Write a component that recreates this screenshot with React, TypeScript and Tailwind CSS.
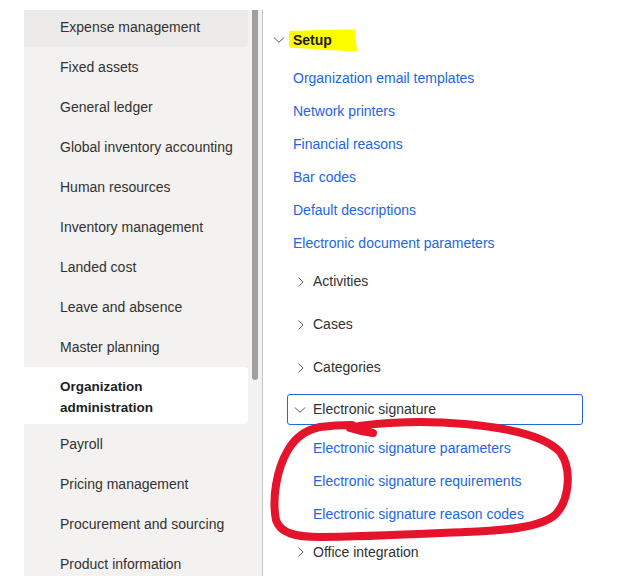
import React from "react";

const font = { fontFamily: '"Liberation Sans", Arial, sans-serif' };

const navItems = [
  "Expense management",
  "Fixed assets",
  "General ledger",
  "Global inventory accounting",
  "Human resources",
  "Inventory management",
  "Landed cost",
  "Leave and absence",
  "Master planning",
  "Organization administration",
  "Payroll",
  "Pricing management",
  "Procurement and sourcing",
  "Product information",
];

const setupLinks = [
  "Organization email templates",
  "Network printers",
  "Financial reasons",
  "Bar codes",
  "Default descriptions",
  "Electronic document parameters",
];

const signatureLinks = [
  "Electronic signature parameters",
  "Electronic signature requirements",
  "Electronic signature reason codes",
];

function ChevronRight() {
  return (
    <svg width="12" height="12" viewBox="0 0 12 12" className="shrink-0">
      <path d="M3.5 1.5 L8 6 L3.5 10.5" fill="none" stroke="#605e5c" strokeWidth="1" />
    </svg>
  );
}

function ChevronDown({ color = "#605e5c" }: { color?: string }) {
  return (
    <svg width="12" height="12" viewBox="0 0 12 12" className="shrink-0">
      <path d="M0.8 3.5 L6 8.2 L11.2 3.5" fill="none" stroke={color} strokeWidth="1" />
    </svg>
  );
}

function NavItem({ label, index }: { label: string; index: number }) {
  const hovered = index === 0;
  const selected = label === "Organization administration";
  if (selected) {
    return (
      <div className="h-[57px] shrink-0 flex items-center bg-white rounded-r-[4px] pl-[36px] pr-[8px] pt-[3px]">
        <span className="max-w-[150px] text-[13.5px] font-bold leading-[21px] text-[#201f1e]">{label}</span>
      </div>
    );
  }
  return (
    <div
      className={
        "h-10 shrink-0 flex items-center pl-[36px] pr-[8px] rounded-r-[4px] " +
        (hovered ? "bg-[#edebe9] -mt-[3px]" : "")
      }
    >
      <span className="text-[14px] leading-5 text-[#323130] whitespace-nowrap">{label}</span>
    </div>
  );
}

function GroupRow({ label }: { label: string }) {
  return (
    <div className="h-[43px] flex items-center pl-[32px]">
      <ChevronRight />
      <span className="ml-[6px] text-[14px] text-[#323130]">{label}</span>
    </div>
  );
}

function LinkRow({ label, indent }: { label: string; indent: string }) {
  return (
    <div className={"h-[33px] flex items-center " + indent}>
      <span className="text-[14px] text-[#2266e3] whitespace-nowrap">{label}</span>
    </div>
  );
}

export default function App() {
  return (
    <div className="relative w-[623px] h-[576px] overflow-hidden bg-white flex" style={font}>
      {/* Module navigation */}
      <div className="ml-[24px] mt-[10px] w-[239px] h-[566px] flex bg-[#f3f2f1] border-r border-[#c8c6c4] overflow-hidden">
        <div className="w-[224px] flex flex-col overflow-hidden">
          {navItems.map((label, i) => (
            <NavItem key={label} label={label} index={i} />
          ))}
        </div>
        <div className="ml-[4px] w-[6px] h-[370px] bg-[#a19f9d] rounded-b-[3px]" />
      </div>

      {/* Menu links */}
      <div className="flex-1 flex flex-col pt-[25px]">
        <div className="h-[30px] flex items-center pl-[10px]">
          <ChevronDown color="#4a5a80" />
          <span className="relative ml-[8px] inline-block leading-5">
            <svg
              className="absolute pointer-events-none"
              style={{ left: -5, top: -1 }}
              width="72"
              height="23"
              viewBox="0 0 72 23"
            >
              <path d="M1 2 C 20 1.5, 45 0.5, 67 0.5 L 69 22 C 45 22, 20 19.5, 1 18.5 Z" fill="#fdfd00" />
            </svg>
            <span className="relative text-[14px] font-bold text-[#1b1a19]">Setup</span>
          </span>
        </div>

        <div className="mt-[7px] flex flex-col">
          {setupLinks.map((l) => (
            <LinkRow key={l} label={l} indent="pl-[30px]" />
          ))}
        </div>

        <GroupRow label="Activities" />
        <GroupRow label="Cases" />
        <GroupRow label="Categories" />

        <div className="mt-[5px] ml-[24px] w-[296px] h-[31px] flex items-center border border-[#2266e3] rounded-[3px] pl-[6px]">
          <ChevronDown />
          <span className="ml-[7px] text-[14px] text-[#323130]">Electronic signature</span>
        </div>

        <div className="mt-[7px] flex flex-col">
          {signatureLinks.map((l) => (
            <LinkRow key={l} label={l} indent="pl-[50px]" />
          ))}
        </div>

        <div className="h-[42px] flex items-center pl-[32px]">
          <ChevronRight />
          <span className="ml-[6px] text-[14px] text-[#323130]">Office integration</span>
        </div>
      </div>

      {/* Hand-drawn loop around the signature links */}
      <svg
        className="absolute inset-0 pointer-events-none"
        width="623"
        height="576"
        viewBox="0 0 623 576"
      >
        <path
          d="M373 433 C 365 432, 356 430, 350 428 C 380 421, 430 421, 465 424 C 510 428, 545 436, 560 452 C 572 468, 570 500, 555 515 C 540 528, 500 531, 465 532 C 420 534, 360 537, 320 537 C 295 537, 280 533, 276 520 C 272 500, 276 470, 288 450 C 295 438, 305 430, 320 427 C 335 425, 345 425, 352 425"
          fill="none"
          stroke="#e5132b"
          strokeWidth="8"
          strokeLinecap="round"
          strokeLinejoin="round"
        />
      </svg>
    </div>
  );
}
